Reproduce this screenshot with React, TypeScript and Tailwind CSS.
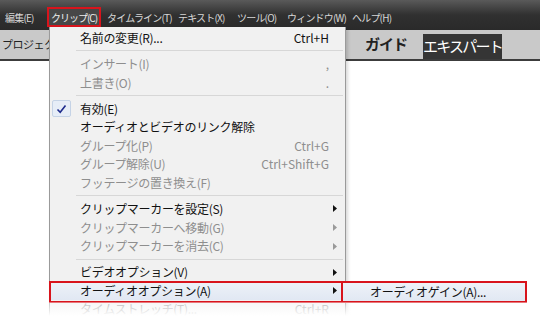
import React from 'react'

type Item =
  | { sep: true }
  | { label: string; shortcut?: string; arrow?: boolean; disabled?: boolean; checked?: boolean; active?: boolean }

const items: Item[] = [
  { label: '名前の変更(R)...', shortcut: 'Ctrl+H' },
  { sep: true },
  { label: 'インサート(I)', shortcut: ',', disabled: true },
  { label: '上書き(O)', shortcut: '.', disabled: true },
  { sep: true },
  { label: '有効(E)', checked: true },
  { label: 'オーディオとビデオのリンク解除' },
  { label: 'グループ化(P)', shortcut: 'Ctrl+G', disabled: true },
  { label: 'グループ解除(U)', shortcut: 'Ctrl+Shift+G', disabled: true },
  { label: 'フッテージの置き換え(F)', disabled: true },
  { sep: true },
  { label: 'クリップマーカーを設定(S)', arrow: true },
  { label: 'クリップマーカーへ移動(G)', arrow: true, disabled: true },
  { label: 'クリップマーカーを消去(C)', arrow: true, disabled: true },
  { sep: true },
  { label: 'ビデオオプション(V)', arrow: true },
  { label: 'オーディオオプション(A)', arrow: true, active: true },
  { label: 'タイムストレッチ(T)...', shortcut: 'Ctrl+R', disabled: true },
]

const menubar = [
  { label: '編集(E)', w: 'w-[42px]' },
  { label: 'クリップ(C)', w: 'w-[60px]', open: true },
  { label: 'タイムライン(T)', w: 'w-[71px]' },
  { label: 'テキスト(X)', w: 'w-[59px]' },
  { label: 'ツール(O)', w: 'w-[50px]' },
  { label: 'ウィンドウ(W)', w: 'w-[65px]' },
  { label: 'ヘルプ(H)', w: 'w-[50px]' },
]

function MenuRow({ item }: { item: Item }) {
  if ('sep' in item) {
    return (
      <div className="h-[7.4px] flex items-center pl-[26px] pr-[2px]">
        <div className="h-px w-full bg-[#d7d7d7]" />
      </div>
    )
  }
  return (
    <div
      className={`relative h-[18.6px] flex items-center pl-[30px] pr-[8px] text-[12px] ${
        item.disabled ? 'text-[#8e8e8e]' : 'text-[#111]'
      } ${item.active ? 'bg-gradient-to-b from-[#eef2f8] to-[#e1e8f3]' : ''}`}
    >
      {item.checked && (
        <div className="absolute left-[2px] top-[1px] w-[19px] h-[17px] rounded-[2px] border border-[#c5d3e6] bg-[#e6edf7] flex items-center justify-center">
          <svg width="11" height="10" viewBox="0 0 11 10">
            <path d="M1.5 5.5 L4.2 8.2 L9.5 1.5" fill="none" stroke="#1d2a8c" strokeWidth="1.6" />
          </svg>
        </div>
      )}
      <span className="flex-1 whitespace-nowrap tracking-[-0.3px]">{item.label}</span>
      {item.shortcut && <span className="whitespace-nowrap mr-[8px]">{item.shortcut}</span>}
      {item.arrow && (
        <svg width="4" height="7" viewBox="0 0 4 7">
          <path d="M0 0 L4 3.5 L0 7 Z" fill={item.disabled ? '#9a9a9a' : '#111'} />
        </svg>
      )}
    </div>
  )
}

export default function App() {
  return (
    <div className="relative w-[540px] h-[316px] overflow-hidden bg-white font-['Noto_Sans_CJK_JP','Noto_Sans',sans-serif]">
      {/* メニューバー */}
      <div className="h-[30px] bg-gradient-to-b from-[#5a5a5a] via-[#303030] to-[#2a2a2a] flex items-start pt-[7px] pl-[5px] text-[10px] text-[#d6d6d6] tracking-[-0.8px]">
        {menubar.map((m) =>
          m.open ? (
            <div key={m.label} className={`${m.w} shrink-0`}>
              <div className="w-[54px] h-[20px] border-2 border-[#d8141c] bg-[#474747] flex items-center justify-center text-[#eee] tracking-[-1px] whitespace-nowrap">
                {m.label}
              </div>
            </div>
          ) : (
            <div key={m.label} className={`${m.w} shrink-0 h-[20px] flex items-center whitespace-nowrap`}>
              {m.label}
            </div>
          )
        )}
      </div>

      {/* ツールバー */}
      <div className="h-[31px] bg-[#c9c9c9] border-b-2 border-[#3c3c3c] flex items-stretch">
        <div className="w-[365px] shrink-0 flex items-center pl-[2px] text-[11px] text-[#222] tracking-[-0.5px] whitespace-nowrap overflow-hidden">
          プロジェクトの
        </div>
        <div className="w-[58px] shrink-0 flex items-center text-[15px] font-bold text-[#222] tracking-[-1px] whitespace-nowrap">ガイド</div>
        <div className="w-[79px] shrink-0 mt-[4px] bg-[#353535] flex items-center justify-center text-[15px] text-white tracking-[-1.8px] whitespace-nowrap">
          エキスパート
        </div>
      </div>

      {/* クリップメニュー */}
      <div className="absolute left-[49px] top-[27px] w-[297px] h-[300px] bg-[#f1f1f1] border-l border-r border-[#9a9a9a] pt-[1.7px] shadow-[2px_2px_3px_rgba(0,0,0,0.15)]">
        {items.map((it, i) => (
          <MenuRow key={i} item={it} />
        ))}
      </div>

      {/* 強調枠 */}
      <div className="absolute left-[49px] top-[281px] w-[298px] h-[22px] border-2 border-[#d8141c]" />

      {/* サブメニュー */}
      <div className="absolute left-[341px] top-[281px] w-[186px] h-[22px] border-2 border-[#d8141c] bg-gradient-to-b from-[#eef2f8] to-[#e1e8f3] flex items-center pl-[27px] text-[12px] text-[#111] tracking-[-0.3px]">
        オーディオゲイン(A)...
      </div>

      {/* 下端のフェード */}
      <div className="absolute left-0 right-0 bottom-0 h-[14px] bg-gradient-to-b from-white/40 to-white" />
    </div>
  )
}
